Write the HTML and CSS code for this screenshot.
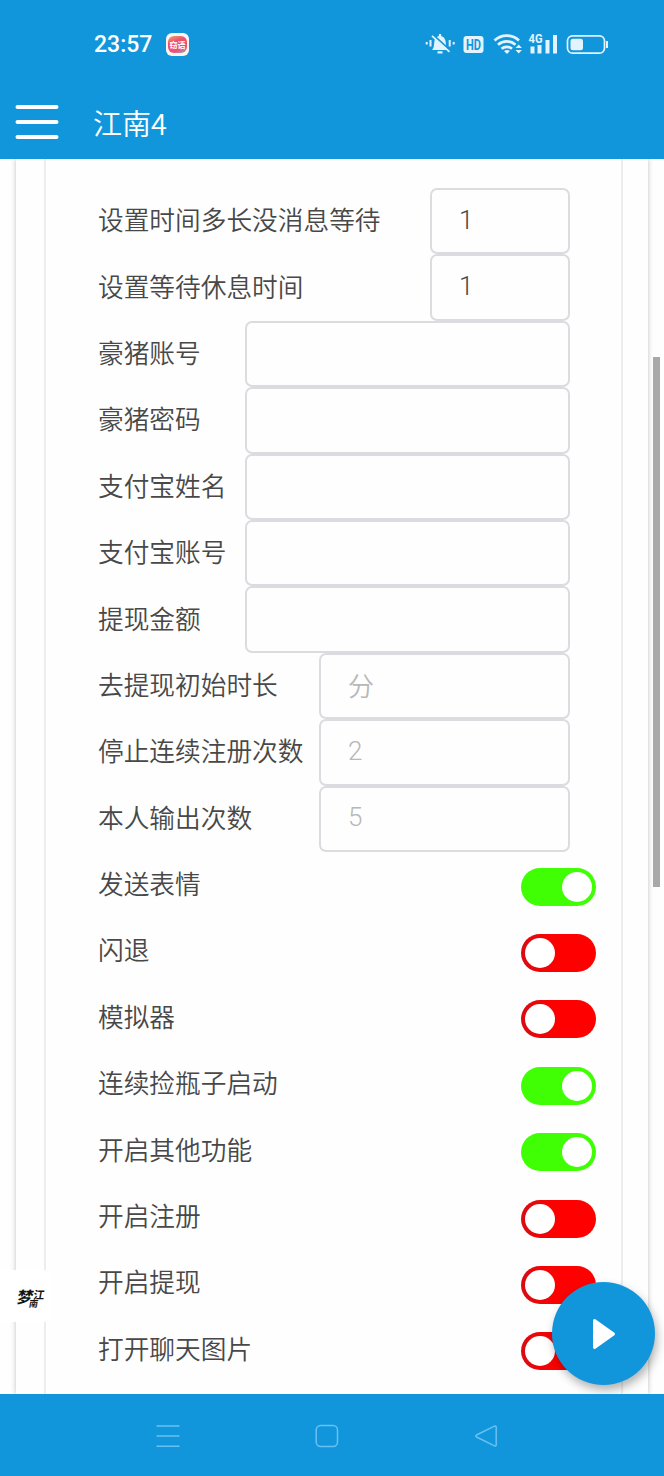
FILE: index.html
```html
<!DOCTYPE html>
<html lang="zh-CN">
<head>
  <meta charset="UTF-8">
  <title>江南4</title>
  <link rel="stylesheet" href="styles.css">
</head>
<body>
  <header class="header">
    <div class="status-bar">
      <span class="clock">23:57</span>
      <span class="app-icon"><span class="app-blob">窃语</span></span>
      <svg class="status-icons" width="186" height="28" viewBox="0 0 186 28" fill="none" stroke="#e3f4ff">
        <!-- muted bell -->
        <path d="M7 20c2-2 2-5 2.300-8 .5-4 2.900-6 5.700-6s5.200 2 5.700 6c.3 3 .3 6 2.300 8z" fill="#e3f4ff" stroke="none"/>
        <path d="M12.500 22.300h5M15 4v3" stroke-width="2.200"/>
        <path d="M8.500 5.300l17.500 16" stroke="#1296db" stroke-width="2"/>
        <path d="M7 5.800l17.500 16" stroke-width="1.800"/>
        <path d="M5.500 10v6.500M1.700 12v2.500M24.700 10v6.500M28.700 12v2.500" stroke-width="2"/>
        <rect x="38.500" y="6" width="20" height="17" rx="3" fill="#e3f4ff" stroke="none"/>
        <text x="48.500" y="19.500" textLength="15" lengthAdjust="spacingAndGlyphs" class="hd-text">HD</text>
        <!-- wifi -->
        <path d="M69.500 10.500c7-6.500 17.500-6.500 24.500 0M73 14.800c5-4.500 12.500-4.500 17.500 0M76.500 18.800c3-2.600 7.500-2.600 10.500 0" stroke-width="2.700"/>
        <path d="M79 21c2-1.400 4-1.400 5.800 0L82 24z" fill="#e3f4ff" stroke="none"/>
        <path d="M90.500 18l3.200-3.500 3.200 3.500zM90.500 20h6.400l-3.200 3.500z" fill="#e3f4ff" stroke="none"/>
        <text x="103.500" y="13" textLength="14" lengthAdjust="spacingAndGlyphs" class="net-text">4G</text>
        <path d="M107.500 16.500V23.500M114.500 15V23.500M122.500 10V23.500M130 5V23.500" stroke-width="4"/>
        <!-- battery -->
        <rect x="142.500" y="5.800" width="37" height="17.400" rx="5" stroke-width="1.700"/>
        <rect x="145.500" y="8.700" width="12.500" height="11.600" rx="2.500" fill="#e3f4ff" stroke="none"/>
        <path d="M182 11v7" stroke-width="2"/>
      </svg>
    </div>
    <div class="title-bar">
      <svg width="44" height="36" viewBox="0 0 44 36" stroke="#fff" stroke-width="4" stroke-linecap="round">
        <path d="M2.500 3h39M2.500 18h39M2.500 33h39"/>
      </svg>
      <h1>江南4</h1>
    </div>
  </header>

  <main class="content">
    <div class="outer-card">
      <div class="inner-card">
        <div class="row"><label>设置时间多长没消息等待</label><div class="field small">1</div></div>
        <div class="row"><label>设置等待休息时间</label><div class="field small">1</div></div>
        <div class="row"><label>豪猪账号</label><div class="field large"></div></div>
        <div class="row"><label>豪猪密码</label><div class="field large"></div></div>
        <div class="row"><label>支付宝姓名</label><div class="field large"></div></div>
        <div class="row"><label>支付宝账号</label><div class="field large"></div></div>
        <div class="row"><label>提现金额</label><div class="field large"></div></div>
        <div class="row"><label>去提现初始时长</label><div class="field medium hint">分</div></div>
        <div class="row"><label>停止连续注册次数</label><div class="field medium hint">2</div></div>
        <div class="row"><label>本人输出次数</label><div class="field medium hint">5</div></div>
        <div class="row toggle-row"><label>发送表情</label><span class="switch on"></span></div>
        <div class="row toggle-row"><label>闪退</label><span class="switch"></span></div>
        <div class="row toggle-row"><label>模拟器</label><span class="switch"></span></div>
        <div class="row toggle-row"><label>连续捡瓶子启动</label><span class="switch on"></span></div>
        <div class="row toggle-row"><label>开启其他功能</label><span class="switch on"></span></div>
        <div class="row toggle-row"><label>开启注册</label><span class="switch"></span></div>
        <div class="row toggle-row"><label>开启提现</label><span class="switch"></span></div>
        <div class="row toggle-row"><label>打开聊天图片</label><span class="switch"></span></div>
      </div>
    </div>
    <div class="scrollbar"></div>
    <div class="float-logo">
      <span class="logo-main">梦</span>
      <span class="logo-side"><span>江</span><span class="logo-last">南</span></span>
    </div>
    <div class="fab">
      <svg width="24" height="32" viewBox="0 0 24 32" fill="#fff" stroke="#fff" stroke-width="3" stroke-linejoin="round">
        <path d="M2.500 2.500L21.500 16 2.500 29.500z"/>
      </svg>
    </div>
  </main>

  <nav class="nav-bar">
    <svg width="24" height="24" viewBox="0 0 24 24"><path d="M0.500 2h23M0.500 12h23M0.500 22.300h23"/></svg>
    <svg width="24" height="24" viewBox="0 0 24 24"><rect x="1.200" y="1.500" width="21.300" height="21" rx="4.500"/></svg>
    <svg width="24" height="24" viewBox="0 0 24 24"><path d="M20.500 2.200L2.500 11q-1.500 1 0 2l18 8.800q1.700.5 1.700-1V3.200q0-1.500-1.700-1z"/></svg>
  </nav>
</body>
</html>
```
FILE: styles.css
```css
* {
  box-sizing: border-box;
}

body {
  margin: 0;
  height: 1476px;
  display: flex;
  flex-direction: column;
  overflow: hidden;
  background: #fefefe;
  color: #484848;
  font-family: "Noto Sans CJK SC", sans-serif;
  font-weight: 350;
}

.header {
  height: 159px;
  flex: none;
  background: #1296db;
  color: #fff;
}

.status-bar {
  height: 88px;
  padding-left: 94px;
  display: flex;
  align-items: center;
}

.clock {
  width: 72px;
  padding-top: 1px;
  font-family: Roboto, sans-serif;
  font-size: 23px;
  font-weight: 500;
  white-space: nowrap;
}

.app-icon {
  width: 23px;
  height: 23px;
  padding: 3px 2px;
  border-radius: 6px;
  background: #fff3ef;
}

.app-blob {
  display: flex;
  align-items: center;
  justify-content: center;
  height: 17px;
  border-radius: 6px;
  background: linear-gradient(160deg, #f3a16b, #e94f72 35%, #ed5270 75%, #78b8d8);
  font-size: 8px;
  font-weight: 700;
}

.status-icons {
  margin-left: 236px;
}

.hd-text {
  font: 700 15px Roboto, sans-serif;
  fill: #1296db;
  stroke: none;
  text-anchor: middle;
}

.net-text {
  font: 700 12.5px Roboto, sans-serif;
  fill: #e3f4ff;
  stroke: none;
}

.title-bar {
  height: 70px;
  padding-left: 15px;
  display: flex;
  align-items: center;
}

.title-bar svg {
  margin-top: -2px;
}

h1 {
  margin: -3px 0 0 34px;
  font-size: 29px;
  font-weight: 350;
  line-height: 40px;
}

.content {
  position: relative;
  height: 1235px;
  flex: none;
  padding: 0 16px;
  overflow: hidden;
}

.outer-card {
  height: 100%;
  padding: 0 25px 0 28px;
  box-shadow: 0 0 5px rgba(0, 0, 0, 0.25);
  background: #fefefe;
}

.inner-card {
  height: 100%;
  padding: 29px 51px 0 52px;
  border: solid #ededed;
  border-width: 0 2px;
}

.row {
  height: 66.4px;
  display: flex;
  align-items: center;
  justify-content: space-between;
}

.row label {
  font-size: 25.7px;
  line-height: 38px;
  white-space: nowrap;
  padding-bottom: 4px;
}

.field {
  height: 66.4px;
  padding: 0 0 3px 27px;
  display: flex;
  align-items: center;
  border: 2px solid #dcdce0;
  border-radius: 7px;
  font-family: Roboto, "Noto Sans CJK SC", sans-serif;
  font-size: 26px;
}

.small {
  width: 140px;
}

.medium {
  width: 251px;
}

.large {
  width: 325px;
}

.hint {
  color: #b8b8b8;
}

.toggle-row {
  margin-right: -26px;
}

.switch {
  width: 75px;
  height: 38px;
  margin-top: 3px;
  padding: 4px;
  display: flex;
  border-radius: 19px;
  background: linear-gradient(90deg, #d80c12, #fe0000 45%);
}

.switch::before {
  content: "";
  width: 30px;
  height: 30px;
  border-radius: 50%;
  background: #fff;
}

.on {
  justify-content: flex-end;
  background: #40ff05;
}

.scrollbar {
  position: absolute;
  top: 198px;
  right: 4px;
  width: 7px;
  height: 530px;
  background: #a9a9a9;
}

.float-logo {
  position: absolute;
  left: 0;
  top: 1111px;
  width: 52px;
  height: 52px;
  padding: 15px 0 0 16px;
  display: flex;
  background: #fff;
  color: #111;
  font-weight: 700;
}

.logo-main {
  font-size: 16px;
  line-height: 22px;
  transform: skewX(-12deg);
}

.logo-side {
  display: flex;
  flex-direction: column;
  padding-top: 4px;
  font-size: 11px;
  line-height: 10px;
  transform: skewX(-10deg);
}

.logo-last {
  font-size: 9px;
  margin-left: -3px;
}

.fab {
  position: absolute;
  right: 9px;
  top: 1123px;
  width: 103px;
  height: 103px;
  display: flex;
  align-items: center;
  justify-content: center;
  border-radius: 50%;
  background: #1296db;
  box-shadow: 2px 5px 10px rgba(0, 0, 0, 0.3);
}

.nav-bar {
  flex: 1;
  padding: 1px 166px 0 156px;
  display: flex;
  align-items: center;
  justify-content: space-between;
  background: #1296db;
}

.nav-bar svg {
  fill: none;
  stroke: #68c1f2;
  stroke-width: 1.5;
}
```
